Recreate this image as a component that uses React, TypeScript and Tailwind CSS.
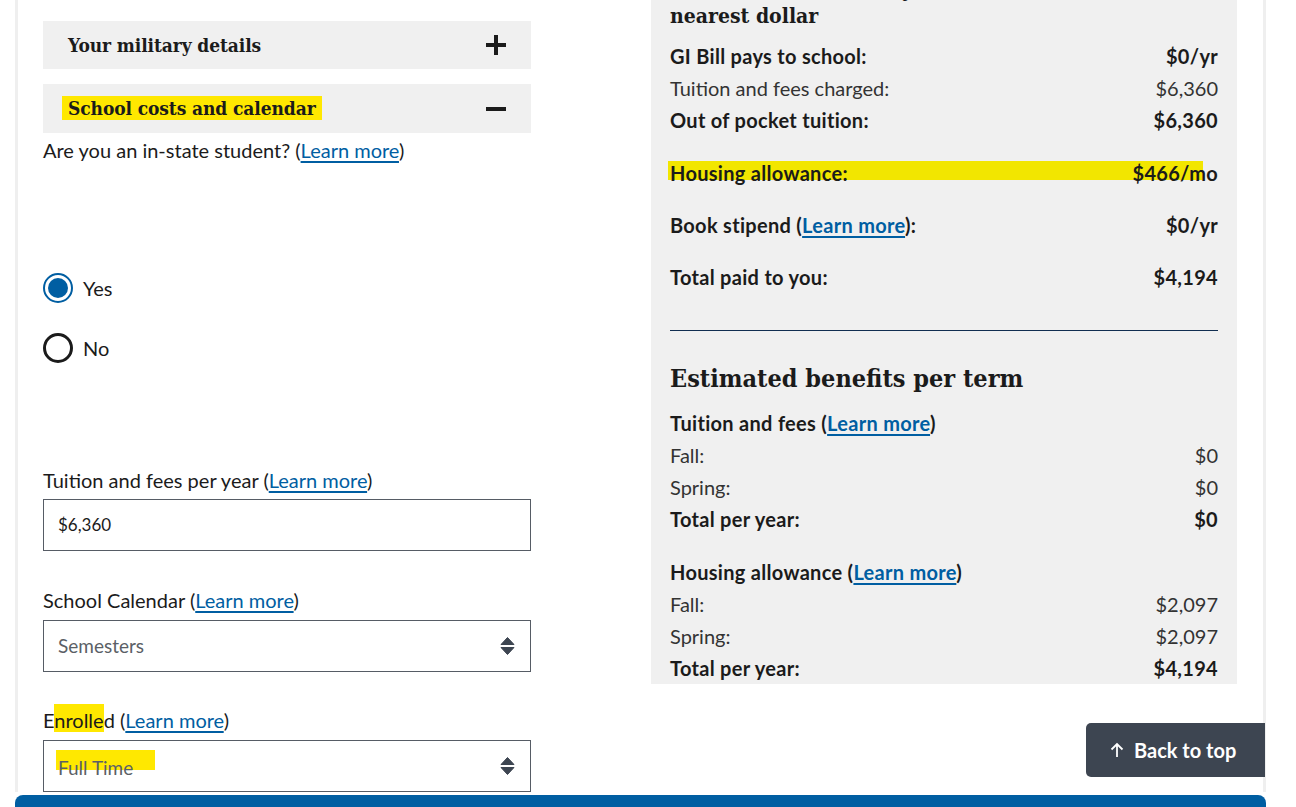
import React from "react";

const sans = "font-['Lato',sans-serif]";
const serif = "font-['DejaVu_Serif',serif] [font-stretch:condensed]";

function PlusIcon() {
  return (
    <svg width="20" height="20" viewBox="0 0 20 20">
      <path d="M8 0h4v8h8v4h-8v8H8v-8H0V8h8z" fill="#1b1b1b" />
    </svg>
  );
}

function MinusIcon() {
  return (
    <svg width="20" height="4" viewBox="0 0 20 4">
      <rect width="20" height="4" fill="#1b1b1b" />
    </svg>
  );
}

function SelectArrows() {
  return (
    <svg width="15" height="20" viewBox="0 0 15 20">
      <path d="M7.5 1.5 L14 8.5 H1 Z" fill="#3d4551" strokeLinejoin="round" stroke="#3d4551" strokeWidth="1" />
      <path d="M1 11.5 H14 L7.5 18.5 Z" fill="#3d4551" strokeLinejoin="round" stroke="#3d4551" strokeWidth="1" />
    </svg>
  );
}

function LearnMore() {
  return (
    <>
      (<span className="text-[#005ea2] underline underline-offset-[3px] decoration-[2px]">Learn more</span>)
    </>
  );
}

function Accordion({ title, open }: { title: React.ReactNode; open?: boolean }) {
  return (
    <div className="flex items-center justify-between bg-[#f0f0f0] pl-[25px] pr-[25px] h-full">
      <span className={`${serif} font-bold text-[19px] tracking-[-0.1px] text-[#1b1b1b]`}>{title}</span>
      {open ? <MinusIcon /> : <PlusIcon />}
    </div>
  );
}

function Row({
  label,
  value,
  bold,
  className = "",
}: {
  label: React.ReactNode;
  value: string;
  bold?: boolean;
  className?: string;
}) {
  return (
    <div
      className={`relative flex h-[32px] items-center justify-between text-[20px] ${
        bold ? "font-bold tracking-[0.3px]" : "font-normal text-[#333333]"
      } ${className}`}
    >
      <span>{label}</span>
      <span>{value}</span>
    </div>
  );
}

export default function App() {
  return (
    <div className={`h-[807px] w-[1296px] overflow-hidden bg-white text-[#1b1b1b] ${sans}`}>
      <div className="ml-[15px] w-[1251px]">
        <div className="flex items-start border-x-[3px] border-[#efefef] pl-[25px] pr-[26px]">
          {/* Left column */}
          <div className="w-[488px] pt-[21px]">
            <div className="h-[48px]">
              <Accordion title="Your military details" />
            </div>
            <div className="mt-[15px] h-[49px]">
              <Accordion
                open
                title={
                  <span className="-mx-[6px] bg-[#ffe800] px-[6px] py-[1px]">School costs and calendar</span>
                }
              />
            </div>
            <p className="mt-[4px] text-[20px] leading-[26px]">
              Are you an in-state student? <LearnMore />
            </p>

            <div className="mt-[110px] flex h-[30px] items-center gap-[10px]">
              <div className="h-[30px] w-[30px] rounded-full border-[2.5px] border-[#005ea2] p-[3px]">
                <div className="h-full w-full rounded-full bg-[#005ea2]" />
              </div>
              <span className="text-[20px]">Yes</span>
            </div>
            <div className="mt-[30px] flex h-[30px] items-center gap-[10px]">
              <div className="h-[30px] w-[30px] rounded-full border-[3px] border-[#1b1b1b]" />
              <span className="text-[20px]">No</span>
            </div>

            <p className="mt-[104px] text-[20px] leading-[26px]">
              Tuition and fees per year <LearnMore />
            </p>
            <div className="mt-[6px] flex h-[52px] items-center border border-[#565c65] px-[14px] text-[17px]">
              $6,360
            </div>

            <p className="mt-[36px] text-[20px] leading-[26px]">
              School Calendar <LearnMore />
            </p>
            <div className="mt-[7px] flex h-[52px] items-center justify-between border border-[#565c65] pl-[14px] pr-[15px] text-[19px] text-[#5b5f66]">
              <span>Semesters</span>
              <SelectArrows />
            </div>

            <p className="mt-[35px] text-[20px] leading-[26px]">
              E<span className="bg-[#ffe800] pt-[4px]">nrolle</span>d <LearnMore />
            </p>
            <div className="relative mt-[7px] flex h-[52px] items-center justify-between border border-[#565c65] pl-[14px] pr-[15px] text-[19px] text-[#5b5f66]">
              <div className="absolute left-[12px] top-[9px] h-[20px] w-[99px] bg-[#ffe800]" />
              <span className="relative pt-[4px]">Full Time</span>
              <SelectArrows />
            </div>
          </div>

          {/* Right panel */}
          <div className="-mt-[43px] ml-auto w-[586px] bg-[#f0f0f0] px-[19px] pt-[20px]">
            <h2 className={`${serif} text-[21px] font-bold leading-[26px]`}>
              Your benefits shown by the
              <br />
              nearest dollar
            </h2>
            <div className="mt-[11px]">
              <Row label="GI Bill pays to school:" value="$0/yr" bold />
              <Row label="Tuition and fees charged:" value="$6,360" />
              <Row label="Out of pocket tuition:" value="$6,360" bold />
              <div className="relative mt-[21px]">
                <div className="absolute left-[-2px] right-[15px] top-[4px] h-[19px] bg-[#f2e600]" />
                <Row label="Housing allowance:" value="$466/mo" bold />
              </div>
              <Row
                className="mt-[20px]"
                label={
                  <>
                    Book stipend <LearnMore />:
                  </>
                }
                value="$0/yr"
                bold
              />
              <Row className="mt-[20px]" label="Total paid to you:" value="$4,194" bold />
            </div>
            <div className="mt-[37px] h-px bg-[#112e51]" />
            <h2 className={`${serif} mt-[32px] text-[25px] font-bold leading-[32px]`}>
              Estimated benefits per term
            </h2>
            <div className="mt-[12px]">
              <Row
                label={
                  <>
                    Tuition and fees <LearnMore />
                  </>
                }
                value=""
                bold
              />
              <Row label="Fall:" value="$0" />
              <Row label="Spring:" value="$0" />
              <Row label="Total per year:" value="$0" bold />
            </div>
            <div className="mt-[21px]">
              <Row
                label={
                  <>
                    Housing allowance <LearnMore />
                  </>
                }
                value=""
                bold
              />
              <Row label="Fall:" value="$2,097" />
              <Row label="Spring:" value="$2,097" />
              <Row label="Total per year:" value="$4,194" bold />
            </div>
          </div>
        </div>
        <div className="mt-[3px] h-[40px] rounded-t-[8px] bg-[#005ea2]" />
      </div>

      {/* Back to top */}
      <div className="fixed bottom-[30px] right-[31px] flex h-[54px] w-[179px] items-center gap-[10px] rounded-l-[5px] bg-[#3d4551] pl-[24px] text-white">
        <svg width="14" height="16" viewBox="0 0 14 16" fill="none" stroke="white" strokeWidth="1.8">
          <path d="M7 15V2M1.5 7.5L7 2l5.5 5.5" />
        </svg>
        <span className="text-[20px] font-bold">Back to top</span>
      </div>
    </div>
  );
}
